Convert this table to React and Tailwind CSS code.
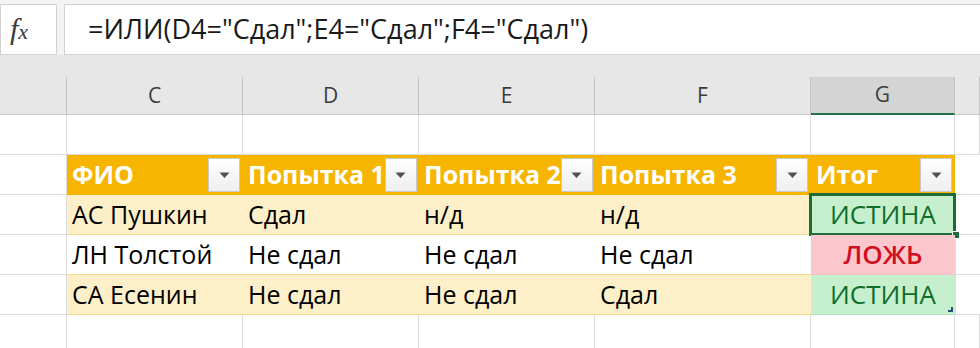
import React from 'react';

const font = { fontFamily: '"Open Sans", "Noto Sans", sans-serif' };

const cols = [
  { key: 'B', w: 'w-[67px]' },
  { key: 'C', w: 'w-[176px]', label: 'C' },
  { key: 'D', w: 'w-[176px]', label: 'D' },
  { key: 'E', w: 'w-[176px]', label: 'E' },
  { key: 'F', w: 'w-[216px]', label: 'F' },
  { key: 'G', w: 'w-[144px]', label: 'G' },
  { key: 'H', w: 'flex-1' },
];

const headers = ['ФИО', 'Попытка 1', 'Попытка 2', 'Попытка 3', 'Итог'];

const rows = [
  { cells: ['АС Пушкин', 'Сдал', 'н/д', 'н/д'], result: true, band: true },
  { cells: ['ЛН Толстой', 'Не сдал', 'Не сдал', 'Не сдал'], result: false, band: false },
  { cells: ['СА Есенин', 'Не сдал', 'Не сдал', 'Сдал'], result: true, band: true },
];

const FilterButton = () => (
  <div className="ml-auto mr-[3px] flex h-[34px] w-[32px] shrink-0 items-center justify-center border border-[#c9c9c9] bg-gradient-to-b from-white to-[#eeeeee]">
    <svg width="11" height="7" viewBox="0 0 11 7">
      <path d="M0.5 0.5 L10.5 0.5 L5.5 6 Z" fill="#505050" />
    </svg>
  </div>
);

const BlankRow = ({ h }) => (
  <div className={`flex ${h}`}>
    {cols.map((c) => (
      <div key={c.key} className={`${c.w} shrink-0 border-b border-r border-[#dcdcdc] bg-white`} />
    ))}
  </div>
);

export default function App() {
  return (
    <div className="h-[348px] w-[980px] overflow-hidden bg-white text-black" style={font}>
      {/* Formula bar */}
      <div className="flex h-[55px] gap-[7px] bg-[#f3f3f3] pt-[4px]">
        <div className="flex w-[57px] items-center border border-[#d2d2d2] bg-white pb-[2px] pl-[9px]">
          <span className="text-[30px] italic leading-none text-[#3a3a3a]" style={{ fontFamily: '"Liberation Serif", serif' }}>
            f<span className="text-[22px]">x</span>
          </span>
        </div>
        <div className="flex flex-1 items-center border border-[#d2d2d2] border-r-0 bg-white pl-[23px] text-[27px] text-[#1a1a1a]">
          =ИЛИ(D4="Сдал";E4="Сдал";F4="Сдал")
        </div>
      </div>

      {/* Column headers */}
      <div className="bg-[#e7e7e7] pt-[22px]">
        <div className="flex h-[38px]">
          {cols.map((c) => {
            const sel = c.key === 'G';
            return (
              <div
                key={c.key}
                className={`${c.w} flex shrink-0 items-center justify-center border-r border-[#c3c3c3] text-[21px] text-[#3c3c3c] ${
                  sel ? 'border-b-2 border-b-[#217346] bg-[#d4d4d4]' : 'border-b border-b-[#c8c8c8]'
                }`}
              >
                {c.label}
              </div>
            );
          })}
        </div>
      </div>

      {/* Blank row */}
      <BlankRow h="h-[40px]" />

      {/* Table header */}
      <div className="flex h-[40px]">
        <div className="w-[67px] shrink-0 border-b border-r border-[#dcdcdc] bg-white" />
        {headers.map((h, i) => (
          <div
            key={h}
            className={`${cols[i + 1].w} flex shrink-0 items-center bg-[#f6b500] pl-[5px] text-[25px] font-bold text-white`}
          >
            <span className="whitespace-nowrap">{h}</span>
            <FilterButton />
          </div>
        ))}
        <div className="flex-1 border-b border-[#dcdcdc] bg-white" />
      </div>

      {/* Data rows */}
      {rows.map((r, ri) => (
        <div key={ri} className="flex h-[40px]">
          <div className="w-[67px] shrink-0 border-b border-r border-[#dcdcdc] bg-white" />
          {r.cells.map((t, ci) => (
            <div
              key={ci}
              className={`${cols[ci + 1].w} flex shrink-0 items-center border-b border-[#f7d98a] pl-[5px] text-[25px] ${
                r.band ? 'bg-[#fdf0c9]' : 'bg-white'
              }`}
            >
              <span className="whitespace-nowrap">{t}</span>
            </div>
          ))}
          <div
            className={`relative flex w-[144px] shrink-0 items-center justify-center border-b text-[26px] ${
              r.result
                ? 'border-[#b8e3c2] bg-[#c6efce] text-[#0e6e2a]'
                : 'border-[#f7c0c6] bg-[#fbc7cd] font-semibold text-[#cf1020]'
            }`}
          >
            {r.result ? 'ИСТИНА' : 'ЛОЖЬ'}
            {ri === 0 && (
              <>
                <div className="absolute -left-[2px] -top-[2px] bottom-[-2px] right-[-1px] border-[3px] border-[#1e6b38]" />
                <div className="absolute -bottom-[5px] -right-[5px] h-[8px] w-[8px] border border-white bg-[#1e6b38]" />
              </>
            )}
            {ri === rows.length - 1 && (
              <svg className="absolute bottom-[1px] right-[1px]" width="6" height="6" viewBox="0 0 6 6">
                <path d="M5 0 V5 H0 V3 H3 V0 Z" fill="#2e4a7a" />
              </svg>
            )}
          </div>
          <div className="flex-1 border-b border-l border-[#dcdcdc] bg-white" />
        </div>
      ))}

      {/* Blank row */}
      <BlankRow h="h-[40px]" />
    </div>
  );
}
